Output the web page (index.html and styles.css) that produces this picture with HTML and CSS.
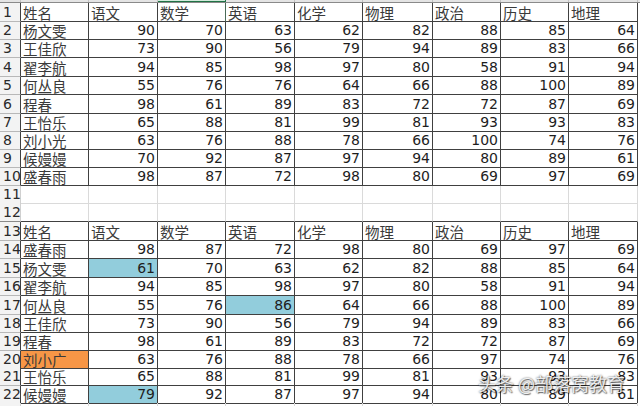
FILE: index.html
```html
<!DOCTYPE html>
<html lang="zh-CN">
<head>
<meta charset="utf-8">
<title>成绩表</title>
<link rel="stylesheet" href="styles.css">
</head>
<body>
<div class="sheet">
  <div class="colhead">
    <div class="ch"></div><div class="ch"></div><div class="ch"></div><div class="ch sel"></div><div class="ch"></div><div class="ch"></div><div class="ch"></div><div class="ch"></div><div class="ch"></div><div class="ch"></div>
  </div>

  <div class="row h19"><div class="rh">1</div><div class="cell t">姓名</div><div class="cell t">语文</div><div class="cell t selc">数学</div><div class="cell t">英语</div><div class="cell t">化学</div><div class="cell t">物理</div><div class="cell t">政治</div><div class="cell t">历史</div><div class="cell t">地理</div></div>
  <div class="row"><div class="rh">2</div><div class="cell t">杨文雯</div><div class="cell n">90</div><div class="cell n">70</div><div class="cell n">63</div><div class="cell n">62</div><div class="cell n">82</div><div class="cell n">88</div><div class="cell n">85</div><div class="cell n">64</div></div>
  <div class="row"><div class="rh">3</div><div class="cell t">王佳欣</div><div class="cell n">73</div><div class="cell n">90</div><div class="cell n">56</div><div class="cell n">79</div><div class="cell n">94</div><div class="cell n">89</div><div class="cell n">83</div><div class="cell n">66</div></div>
  <div class="row h19"><div class="rh">4</div><div class="cell t">翟李航</div><div class="cell n">94</div><div class="cell n">85</div><div class="cell n">98</div><div class="cell n">97</div><div class="cell n">80</div><div class="cell n">58</div><div class="cell n">91</div><div class="cell n">94</div></div>
  <div class="row"><div class="rh">5</div><div class="cell t">何丛良</div><div class="cell n">55</div><div class="cell n">76</div><div class="cell n">76</div><div class="cell n">64</div><div class="cell n">66</div><div class="cell n">88</div><div class="cell n">100</div><div class="cell n">89</div></div>
  <div class="row h19"><div class="rh">6</div><div class="cell t">程春</div><div class="cell n">98</div><div class="cell n">61</div><div class="cell n">89</div><div class="cell n">83</div><div class="cell n">72</div><div class="cell n">72</div><div class="cell n">87</div><div class="cell n">69</div></div>
  <div class="row"><div class="rh">7</div><div class="cell t">王怡乐</div><div class="cell n">65</div><div class="cell n">88</div><div class="cell n">81</div><div class="cell n">99</div><div class="cell n">81</div><div class="cell n">93</div><div class="cell n">93</div><div class="cell n">83</div></div>
  <div class="row"><div class="rh">8</div><div class="cell t">刘小光</div><div class="cell n">63</div><div class="cell n">76</div><div class="cell n">88</div><div class="cell n">78</div><div class="cell n">66</div><div class="cell n">100</div><div class="cell n">74</div><div class="cell n">76</div></div>
  <div class="row"><div class="rh">9</div><div class="cell t">候嫚嫚</div><div class="cell n">70</div><div class="cell n">92</div><div class="cell n">87</div><div class="cell n">97</div><div class="cell n">94</div><div class="cell n">80</div><div class="cell n">89</div><div class="cell n">61</div></div>
  <div class="row"><div class="rh">10</div><div class="cell t">盛春雨</div><div class="cell n">98</div><div class="cell n">87</div><div class="cell n">72</div><div class="cell n">98</div><div class="cell n">80</div><div class="cell n">69</div><div class="cell n">97</div><div class="cell n">69</div></div>
  <div class="row blank h17"><div class="rh">11</div><div class="cell"></div><div class="cell"></div><div class="cell"></div><div class="cell"></div><div class="cell"></div><div class="cell"></div><div class="cell"></div><div class="cell"></div><div class="cell"></div></div>
  <div class="row blank last h19"><div class="rh">12</div><div class="cell"></div><div class="cell"></div><div class="cell"></div><div class="cell"></div><div class="cell"></div><div class="cell"></div><div class="cell"></div><div class="cell"></div><div class="cell"></div></div>

  <div class="row h19"><div class="rh">13</div><div class="cell t">姓名</div><div class="cell t">语文</div><div class="cell t">数学</div><div class="cell t">英语</div><div class="cell t">化学</div><div class="cell t">物理</div><div class="cell t">政治</div><div class="cell t">历史</div><div class="cell t">地理</div></div>
  <div class="row"><div class="rh">14</div><div class="cell t">盛春雨</div><div class="cell n">98</div><div class="cell n">87</div><div class="cell n">72</div><div class="cell n">98</div><div class="cell n">80</div><div class="cell n">69</div><div class="cell n">97</div><div class="cell n">69</div></div>
  <div class="row h19"><div class="rh">15</div><div class="cell t">杨文雯</div><div class="cell n blue">61</div><div class="cell n">70</div><div class="cell n">63</div><div class="cell n">62</div><div class="cell n">82</div><div class="cell n">88</div><div class="cell n">85</div><div class="cell n">64</div></div>
  <div class="row"><div class="rh">16</div><div class="cell t">翟李航</div><div class="cell n">94</div><div class="cell n">85</div><div class="cell n">98</div><div class="cell n">97</div><div class="cell n">80</div><div class="cell n">58</div><div class="cell n">91</div><div class="cell n">94</div></div>
  <div class="row h19"><div class="rh">17</div><div class="cell t">何丛良</div><div class="cell n">55</div><div class="cell n">76</div><div class="cell n blue">86</div><div class="cell n">64</div><div class="cell n">66</div><div class="cell n">88</div><div class="cell n">100</div><div class="cell n">89</div></div>
  <div class="row"><div class="rh">18</div><div class="cell t">王佳欣</div><div class="cell n">73</div><div class="cell n">90</div><div class="cell n">56</div><div class="cell n">79</div><div class="cell n">94</div><div class="cell n">89</div><div class="cell n">83</div><div class="cell n">66</div></div>
  <div class="row"><div class="rh">19</div><div class="cell t">程春</div><div class="cell n">98</div><div class="cell n">61</div><div class="cell n">89</div><div class="cell n">83</div><div class="cell n">72</div><div class="cell n">72</div><div class="cell n">87</div><div class="cell n">69</div></div>
  <div class="row h17"><div class="rh">20</div><div class="cell t orange">刘小广</div><div class="cell n">63</div><div class="cell n">76</div><div class="cell n">88</div><div class="cell n">78</div><div class="cell n">66</div><div class="cell n">97</div><div class="cell n">74</div><div class="cell n">76</div></div>
  <div class="row"><div class="rh">21</div><div class="cell t">王怡乐</div><div class="cell n">65</div><div class="cell n">88</div><div class="cell n">81</div><div class="cell n">99</div><div class="cell n">81</div><div class="cell n">93</div><div class="cell n">93</div><div class="cell n">83</div></div>
  <div class="row h17"><div class="rh">22</div><div class="cell t">候嫚嫚</div><div class="cell n blue">79</div><div class="cell n">92</div><div class="cell n">87</div><div class="cell n">97</div><div class="cell n">94</div><div class="cell n">80</div><div class="cell n">89</div><div class="cell n">61</div></div>
  <div class="row blank"><div class="rh"></div><div class="cell"></div><div class="cell"></div><div class="cell"></div><div class="cell"></div><div class="cell"></div><div class="cell"></div><div class="cell"></div><div class="cell"></div><div class="cell"></div></div>

  <div class="watermark">头条 @部落窝教育</div>
</div>
</body>
</html>
```

FILE: styles.css
```css
* { box-sizing: border-box; }

html, body {
  margin: 0;
  padding: 0;
  background: #ffffff;
}

.sheet {
  position: relative;
  width: 640px;
  height: 406px;
  overflow: hidden;
  font-family: "DejaVu Sans", "Noto Sans CJK SC", sans-serif;
  font-size: 14px;
  color: #222;
}

.colhead,
.row {
  display: grid;
  grid-template-columns: 21px 68px 69px 68px 69px 68px 70px 68px 68px 69px 2px;
}

.colhead {
  height: 3px;
  background: #e4e4e4;
  border-bottom: 1px solid #8a8a8a;
}

.ch {
  border-right: 1px solid #c4c4c4;
}

.ch.sel {
  background: #d2eadb;
  border-right-color: #217346;
  border-bottom: 1px solid #217346;
}

.row {
  height: 18px;
}

.row.h19 { height: 19px; }
.row.h17 { height: 17px; }

.rh {
  display: flex;
  align-items: flex-end;
  padding: 0 0 1px 3px;
  background: #f3f3f3;
  border-bottom: 1px solid #b8b8b8;
  border-right: 1px solid #404040;
  color: #2a2a2a;
  line-height: 16px;
}

.cell {
  display: flex;
  align-items: flex-end;
  border-right: 1px solid #404040;
  border-bottom: 1px solid #404040;
  line-height: 16px;
  padding-bottom: 1px;
  white-space: nowrap;
}

.cell.t {
  justify-content: flex-start;
  padding-left: 2px;
  padding-bottom: 0;
  color: #3a3a3a;
  font-family: "Noto Sans CJK SC", "DejaVu Sans", sans-serif;
  font-size: 14.5px;
  line-height: 17px;
}

.cell.n {
  justify-content: flex-end;
  padding-right: 2px;
  color: #1e1e1e;
}

.cell.selc {
  border-right-color: #4a6b57;
}

.row.blank .rh {
  border-right-color: #d0d0d0;
}

.row.blank .cell {
  border-right-color: #dadada;
  border-bottom-color: #dadada;
}

.row.blank.last .cell {
  border-bottom-color: #404040;
}

.row.blank.last .rh {
  border-bottom-color: #8a8a8a;
}

.blue {
  background: #92cddc;
}

.orange {
  background: #f79646;
}

.watermark {
  position: absolute;
  left: 478px;
  top: 371px;
  font-family: "Noto Sans CJK SC", sans-serif;
  font-size: 18px;
  line-height: 24px;
  color: rgba(255, 255, 255, 0.88);
  text-shadow: 0 0 2px rgba(0, 0, 0, 0.7), 1px 1px 1px rgba(0, 0, 0, 0.5);
  white-space: nowrap;
}
```
